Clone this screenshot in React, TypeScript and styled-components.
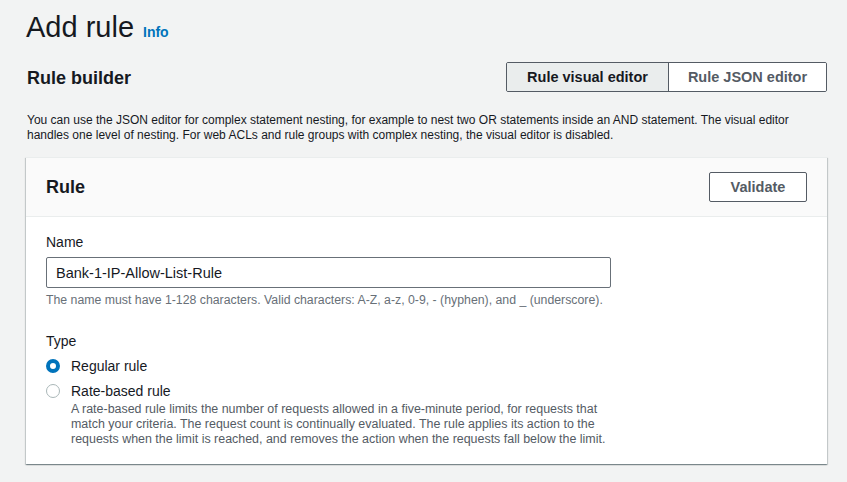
import React from "react";
import styled, { createGlobalStyle } from "styled-components";

const Global = createGlobalStyle`
  html, body { margin: 0; padding: 0; background: #f2f3f3; }
  body { font-family: "Liberation Sans", Arial, sans-serif; color: #16191f; }
  * { box-sizing: border-box; }
`;

const Page = styled.div`
  padding: 10px 20px 0 26px;
  width: 847px;
  height: 482px;
  overflow: hidden;
  background: #f2f3f3;
`;

const TitleRow = styled.div`
  display: flex;
  align-items: baseline;
  gap: 9px;
  height: 34px;
`;

const Title = styled.h1`
  margin: 0;
  font-size: 29px;
  font-weight: 400;
  line-height: 34px;
  color: #16191f;
`;

const InfoLink = styled.a`
  font-size: 14px;
  font-weight: 700;
  color: #0073bb;
  text-decoration: none;
`;

const BuilderRow = styled.div`
  display: flex;
  align-items: center;
  justify-content: space-between;
  margin-top: 18px;
  padding-left: 1px;
`;

const SectionTitle = styled.h2`
  margin: 0;
  font-size: 18px;
  font-weight: 700;
  line-height: 22px;
  padding-top: 1px;
`;

const Segmented = styled.div`
  display: flex;
  border: 1px solid #545b64;
  border-radius: 2px;
  overflow: hidden;
  height: 30px;
`;

const SegButton = styled.button<{ $active?: boolean }>`
  font-family: inherit;
  font-size: 14.5px;
  font-weight: 700;
  border: none;
  border-left: ${(p) => (p.$active ? "none" : "1px solid #545b64")};
  background: ${(p) => (p.$active ? "#eaeded" : "#ffffff")};
  color: ${(p) => (p.$active ? "#16191f" : "#545b64")};
  width: ${(p) => (p.$active ? "161px" : "158px")};
  padding: 0;
  cursor: pointer;
`;

const Description = styled.p`
  margin: 21px 0 0 1px;
  font-size: 12px;
  line-height: 15px;
  color: #16191f;
`;

const Card = styled.section`
  margin-top: 14px;
  background: #ffffff;
  border-top: 1px solid #eaeded;
  box-shadow: 0 1px 1px 0 rgba(0, 28, 36, 0.3), 1px 1px 1px 0 rgba(0, 28, 36, 0.15),
    -1px 1px 1px 0 rgba(0, 28, 36, 0.15);
`;

const CardHeader = styled.div`
  display: flex;
  align-items: center;
  justify-content: space-between;
  padding: 14px 20px;
  background: #fafafa;
  border-bottom: 1px solid #eaeded;
`;

const CardTitle = styled.h2`
  margin: 0;
  font-size: 18px;
  font-weight: 700;
  line-height: 22px;
`;

const Button = styled.button`
  width: 98px;
  height: 30px;
  background: #ffffff;
  border: 1px solid #545b64;
  border-radius: 2px;
  font-family: inherit;
  font-size: 14.5px;
  font-weight: 700;
  color: #545b64;
  padding: 0;
  cursor: pointer;
`;

const CardBody = styled.div`
  padding: 14px 20px 17px;
`;

const Field = styled.div<{ $gap?: number }>`
  display: flex;
  flex-direction: column;
  margin-top: ${(p) => p.$gap ?? 0}px;
`;

const Label = styled.label`
  font-size: 14px;
  line-height: 22px;
  color: #16191f;
`;

const Input = styled.input`
  margin-top: 4px;
  width: 565px;
  height: 31px;
  border: 1px solid #687078;
  border-radius: 2px;
  padding: 0 9px;
  font-family: inherit;
  font-size: 14.5px;
  color: #16191f;
  outline: none;
`;

const Hint = styled.div`
  margin-top: 4px;
  font-size: 12.3px;
  line-height: 16px;
  color: #687078;
`;

const RadioRow = styled.label`
  display: grid;
  grid-template-columns: 14px 1fr;
  column-gap: 11px;
  margin-top: 3px;
  align-items: start;
`;

const RadioCircle = styled.span<{ $checked?: boolean }>`
  width: 14px;
  height: 14px;
  margin-top: 4px;
  border-radius: 50%;
  background: #ffffff;
  border: ${(p) => (p.$checked ? "4px solid #0073bb" : "1px solid #aab7b8")};
`;

const RadioText = styled.div`
  display: flex;
  flex-direction: column;
`;

const RadioLabel = styled.span`
  font-size: 14px;
  line-height: 22px;
  color: #16191f;
`;

const RadioDesc = styled.span`
  font-size: 12.45px;
  line-height: 15px;
  color: #545b64;
  max-width: 545px;
`;

export default function App() {
  return (
    <>
      <Global />
      <Page>
        <TitleRow>
          <Title>Add rule</Title>
          <InfoLink href="#">Info</InfoLink>
        </TitleRow>
        <BuilderRow>
          <SectionTitle>Rule builder</SectionTitle>
          <Segmented>
            <SegButton $active>Rule visual editor</SegButton>
            <SegButton>Rule JSON editor</SegButton>
          </Segmented>
        </BuilderRow>
        <Description>
          You can use the JSON editor for complex statement nesting, for example to nest two OR statements inside an AND
          statement. The visual editor handles one level of nesting. For web ACLs and rule groups with complex nesting,
          the visual editor is disabled.
        </Description>
        <Card>
          <CardHeader>
            <CardTitle>Rule</CardTitle>
            <Button>Validate</Button>
          </CardHeader>
          <CardBody>
            <Field>
              <Label>Name</Label>
              <Input defaultValue="Bank-1-IP-Allow-List-Rule" />
              <Hint>
                The name must have 1-128 characters. Valid characters: A-Z, a-z, 0-9, - (hyphen), and _ (underscore).
              </Hint>
            </Field>
            <Field $gap={22}>
              <Label>Type</Label>
              <RadioRow>
                <RadioCircle $checked />
                <RadioText>
                  <RadioLabel>Regular rule</RadioLabel>
                </RadioText>
              </RadioRow>
              <RadioRow>
                <RadioCircle />
                <RadioText>
                  <RadioLabel>Rate-based rule</RadioLabel>
                  <RadioDesc>
                    A rate-based rule limits the number of requests allowed in a five-minute period, for requests that
                    match your criteria. The request count is continually evaluated. The rule applies its action to the
                    requests when the limit is reached, and removes the action when the requests fall below the limit.
                  </RadioDesc>
                </RadioText>
              </RadioRow>
            </Field>
          </CardBody>
        </Card>
      </Page>
    </>
  );
}
